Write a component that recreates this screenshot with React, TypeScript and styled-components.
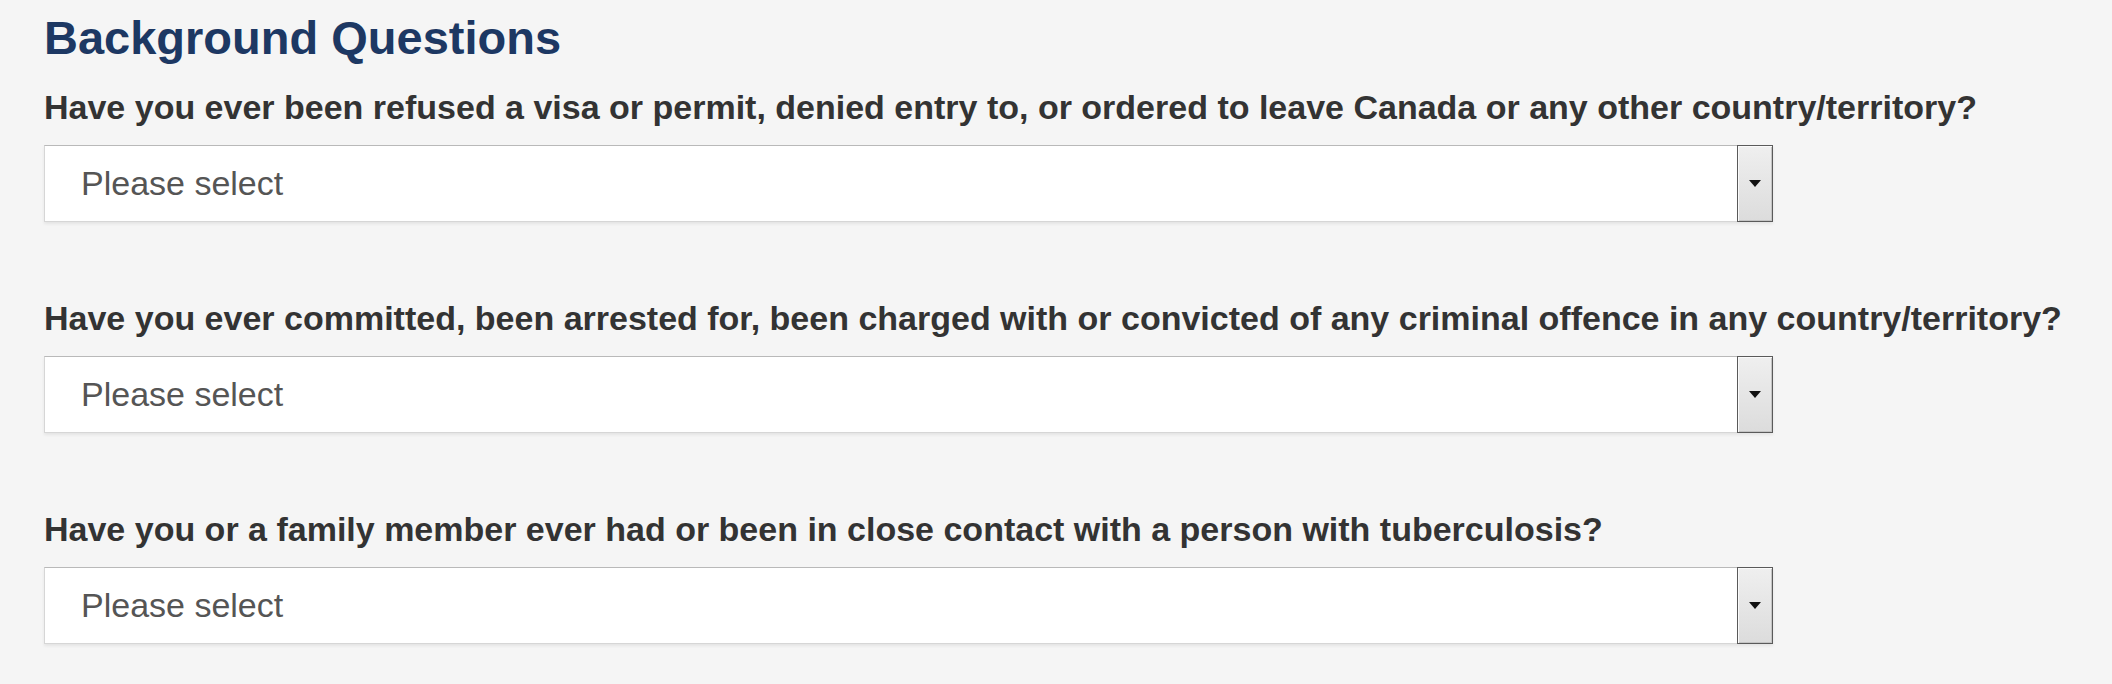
import React from "react";
import styled, { createGlobalStyle } from "styled-components";

const questions: { id: number; text: string }[] = [
  {
    id: 1,
    text: "Have you ever been refused a visa or permit, denied entry to, or ordered to leave Canada or any other country/territory?",
  },
  {
    id: 2,
    text: "Have you ever committed, been arrested for, been charged with or convicted of any criminal offence in any country/territory?",
  },
  {
    id: 3,
    text: "Have you or a family member ever had or been in close contact with a person with tuberculosis?",
  },
];

export default function App() {
  return (
    <>
      <GlobalStyle />
      <Page>
        <Heading>Background Questions</Heading>
        <QuestionList>
          {questions.map(({ id, text }) => (
            <Field key={id}>
              <Label>{text}</Label>
              <Select>
                <SelectValue>Please select</SelectValue>
                <SelectButton>
                  <Arrow />
                </SelectButton>
              </Select>
            </Field>
          ))}
        </QuestionList>
      </Page>
    </>
  );
}

const GlobalStyle = createGlobalStyle`
  html, body {
    margin: 0;
    padding: 0;
    background: #f5f5f5;
  }
  body {
    font-family: "Liberation Sans", Arial, sans-serif;
  }
`;

const Page = styled.main`
  width: 100%;
  min-height: 684px;
  box-sizing: border-box;
  padding: 14px 0 0 44px;
  background: #f5f5f5;
`;

const Heading = styled.h2`
  margin: 0;
  font-size: 47px;
  line-height: 47px;
  font-weight: 700;
  color: #1d3863;
`;

const QuestionList = styled.div`
  display: flex;
  flex-direction: column;
  gap: 76px;
  margin-top: 26px;
`;

const Field = styled.div`
  display: flex;
  flex-direction: column;
  gap: 18px;
`;

const Label = styled.label`
  font-size: 34px;
  line-height: 40px;
  font-weight: 700;
  color: #333;
  white-space: nowrap;
`;

const Select = styled.div`
  width: 1729px;
  height: 77px;
  box-sizing: border-box;
  display: flex;
  align-items: stretch;
  background: #fff;
  border: 1px solid #d6d6d6;
  border-top-color: #b9b9b9;
  box-shadow: 0 2px 3px rgba(0, 0, 0, 0.07);
`;

const SelectValue = styled.span`
  flex: 1;
  display: flex;
  align-items: center;
  padding-left: 36px;
  font-size: 34px;
  color: #555;
`;

const SelectButton = styled.span`
  width: 36px;
  box-sizing: border-box;
  display: flex;
  align-items: center;
  justify-content: center;
  border: 1px solid #5a5a5a;
  margin: -1px -1px -1px 0;
  background: linear-gradient(#efefef, #dcdcdc);
  box-shadow: inset 1px 1px 0 #fafafa, inset -1px -1px 0 #c4c4c4;
`;

const Arrow = styled.span`
  width: 0;
  height: 0;
  border-left: 6px solid transparent;
  border-right: 6px solid transparent;
  border-top: 7px solid #111;
`;
